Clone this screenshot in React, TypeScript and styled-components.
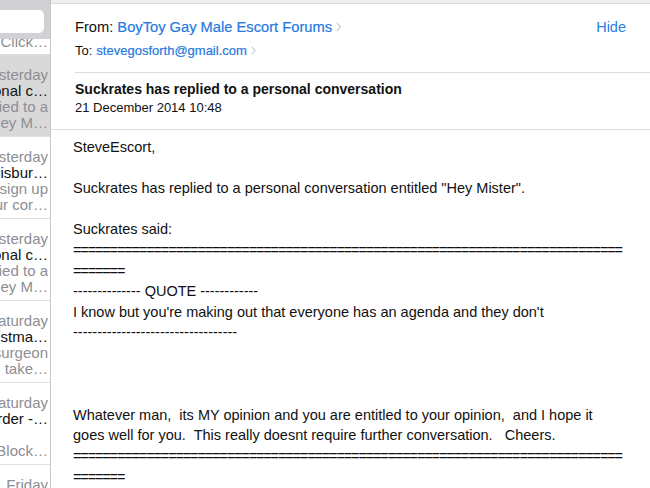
import React from "react";
import styled, { createGlobalStyle } from "styled-components";

const Global = createGlobalStyle`
  html, body { margin: 0; padding: 0; background: #fff; }
  body { font-family: "Liberation Sans", Helvetica, Arial, sans-serif; -webkit-font-smoothing: antialiased; }
`;

const Page = styled.div`
  display: flex;
  width: 650px;
  height: 488px;
  overflow: hidden;
  background: #fff;
`;

const Sidebar = styled.aside`
  width: 50px;
  flex: none;
  border-right: 1px solid #c8c7cc;
  display: flex;
  flex-direction: column;
  overflow: hidden;
  background: #fff;
`;

const SearchBar = styled.div`
  height: 39px;
  flex: none;
  background: #d1d1d5;
  display: flex;
  align-items: center;
  padding-right: 6px;
  justify-content: flex-end;
  position: relative;
  z-index: 1;
`;

const SearchField = styled.div`
  width: 60px;
  height: 23px;
  margin-top: 4px;
  margin-left: -20px;
  background: #fff;
  border-radius: 5px;
`;

const Row = styled.div<{ $h: number; $selected?: boolean; $last?: boolean }>`
  height: ${(p) => p.$h}px;
  flex: none;
  box-sizing: border-box;
  background: ${(p) => (p.$selected ? "#d9d9d9" : "#fff")};
  border-bottom: ${(p) => (p.$last ? "none" : "1px solid #dedee0")};
  display: flex;
  flex-direction: column;
  padding: 12px 2px 0 0;
  overflow: hidden;
`;

const StubRow = styled(Row)`
  padding-top: 0;
  justify-content: flex-end;
  padding-bottom: 4px;
`;

const Line = styled.div<{ $tone?: "date" | "subject" | "preview" }>`
  flex: none;
  display: flex;
  justify-content: flex-end;
  height: 16px;
  line-height: 16px;
  font-size: 15px;
  white-space: pre;
  color: ${(p) => (p.$tone === "subject" ? "#111" : "#8e8e93")};
  overflow: hidden;
  & > span { flex: none; }
`;

const Main = styled.main`
  flex: 1;
  display: flex;
  flex-direction: column;
  min-width: 0;
`;

const TopStrip = styled.div`
  height: 3px;
  flex: none;
  background: #efeff1;
  border-bottom: 1px solid #dcdcde;
`;

const Header = styled.div`
  padding: 13px 24px 0 24px;
  display: flex;
  flex-direction: column;
  gap: 4px;
`;

const FromRow = styled.div`
  display: flex;
  align-items: center;
  height: 20px;
  font-size: 14.7px;
  color: #111;
`;

const ToRow = styled.div`
  display: flex;
  align-items: center;
  height: 18px;
  font-size: 13px;
  color: #111;
`;

const Addr = styled.span`
  color: #2679e0;
  margin-left: 4px;
  -webkit-text-stroke: 0.2px #2679e0;
`;

const Chevron = styled.span`
  display: inline-flex;
  margin-left: 4px;
  color: #c7c7cc;
`;

const Hide = styled.span`
  margin-left: auto;
  color: #2b7de1;
  font-size: 14.5px;
`;

const Divider = styled.div<{ $inset: number; $top?: number }>`
  height: 1px;
  margin-left: ${(p) => p.$inset}px;
  margin-top: ${(p) => p.$top ?? 0}px;
  background: #dcdcde;
  flex: none;
`;

const SubjectBlock = styled.div`
  padding: 7px 24px 12px 24px;
  display: flex;
  flex-direction: column;
  gap: 1px;
`;

const Subject = styled.div`
  font-size: 14px;
  font-weight: 700;
  line-height: 18px;
  color: #111;
`;

const DateLine = styled.div`
  font-size: 13px;
  line-height: 18px;
  color: #111;
`;

const Body = styled.div`
  padding: 7px 0 0 22px;
  font-size: 14.5px;
  line-height: 20.6px;
  color: #111;
  white-space: pre;
`;

const Rule = styled.span`
  letter-spacing: -1.15px;
`;

const Chev = ({ size }: { size: number }) => (
  <Chevron>
    <svg width={size * 0.45} height={size} viewBox="0 0 6 12">
      <path d="M1 1.5 L5 6 L1 10.5" fill="none" stroke="currentColor" strokeWidth="1.3" />
    </svg>
  </Chevron>
);

type Mail = { date: string; subject: string; p1: string; p2: string; selected?: boolean };

const mails: Mail[] = [
  {
    date: "Yesterday",
    subject: "Suckrates has replied to a personal c…",
    p1: "SteveEscort, Suckrates has replied to a",
    p2: "personal conversation entitled \"Hey M…",
    selected: true,
  },
  {
    date: "Yesterday",
    subject: "Welcome to Salisbur…",
    p1: "Thank you for taking the time to sign up",
    p2: "to receive our cor…",
  },
  {
    date: "Yesterday",
    subject: "Suckrates has replied to a personal c…",
    p1: "SteveEscort, Suckrates has replied to a",
    p2: "personal conversation entitled \"Hey M…",
  },
  {
    date: "Saturday",
    subject: "Happy Christma…",
    p1: "Dear Steve, from your cosmetic surgeon",
    p2: "we hope you take…",
  },
  {
    date: "Saturday",
    subject: "Your order -…",
    p1: " ",
    p2: "Block…",
  },
];

const eq1 = "=".repeat(75);
const eq2 = "=".repeat(7);

export default function App() {
  return (
    <>
      <Global />
      <Page>
        <Sidebar>
          <SearchBar>
            <SearchField />
          </SearchBar>
          <StubRow $h={16}>
            <Line $tone="preview">
              <span>Click…</span>
            </Line>
          </StubRow>
          {mails.map((m, i) => (
            <Row key={i} $h={82} $selected={m.selected}>
              <Line $tone="date">
                <span>{m.date}</span>
              </Line>
              <Line $tone="subject">
                <span>{m.subject}</span>
              </Line>
              <Line $tone="preview">
                <span>{m.p1}</span>
              </Line>
              <Line $tone="preview">
                <span>{m.p2}</span>
              </Line>
            </Row>
          ))}
          <Row $h={40} $last>
            <Line $tone="date">
              <span>Friday</span>
            </Line>
          </Row>
        </Sidebar>
        <Main>
          <TopStrip />
          <Header>
            <FromRow>
              <span>From:</span>
              <Addr>BoyToy Gay Male Escort Forums</Addr>
              <Chev size={12} />
              <Hide>Hide</Hide>
            </FromRow>
            <ToRow>
              <span>To:</span>
              <Addr>stevegosforth@gmail.com</Addr>
              <Chev size={11} />
            </ToRow>
          </Header>
          <Divider $inset={24} $top={13} />
          <SubjectBlock>
            <Subject>Suckrates has replied to a personal conversation</Subject>
            <DateLine>21 December 2014 10:48</DateLine>
          </SubjectBlock>
          <Divider $inset={0} />
          <Body>
            {"SteveEscort,\n\nSuckrates has replied to a personal conversation entitled \"Hey Mister\".\n\nSuckrates said:\n"}
            <Rule>{eq1}</Rule>
            {"\n"}
            <Rule>{eq2}</Rule>
            {"\n" + "-".repeat(14) + " QUOTE " + "-".repeat(12) + "\n"}
            {"I know but you're making out that everyone has an agenda and they don't\n"}
            {"-".repeat(34) + "\n\n\n\n"}
            {"Whatever man,  its MY opinion and you are entitled to your opinion,  and I hope it\n"}
            {"goes well for you.  This really doesnt require further conversation.   Cheers.\n"}
            <Rule>{eq1}</Rule>
            {"\n"}
            <Rule>{eq2}</Rule>
          </Body>
        </Main>
      </Page>
    </>
  );
}
